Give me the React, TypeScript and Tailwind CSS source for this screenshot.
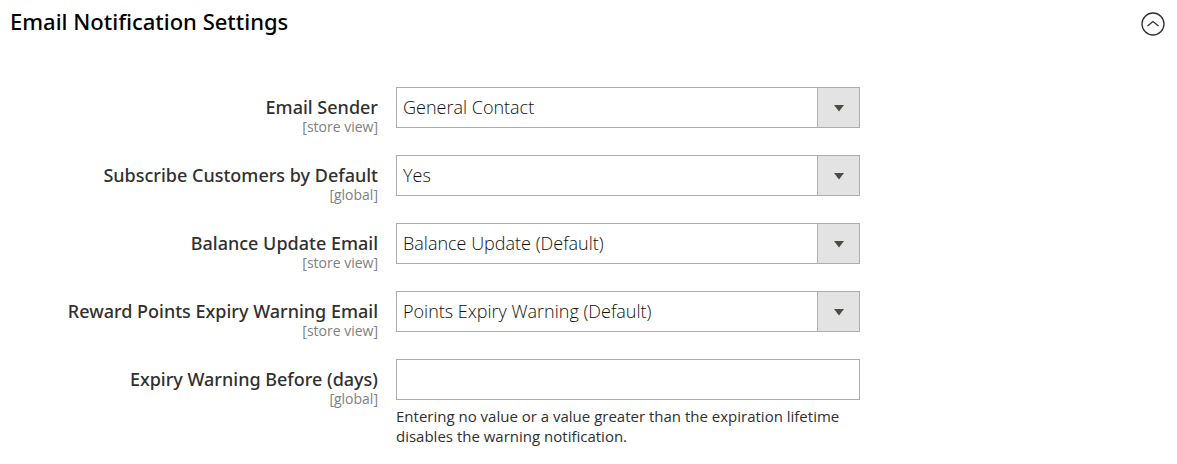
import React, { useState } from "react";

type Field = { id: string; label: string; scope: string; options?: string[]; note?: string };

const fields: Field[] = [
  { id: "sender", label: "Email Sender", scope: "[store view]", options: ["General Contact"] },
  { id: "subscribe", label: "Subscribe Customers by Default", scope: "[global]", options: ["Yes", "No"] },
  { id: "balance", label: "Balance Update Email", scope: "[store view]", options: ["Balance Update (Default)"] },
  { id: "expiry", label: "Reward Points Expiry Warning Email", scope: "[store view]", options: ["Points Expiry Warning (Default)"] },
  {
    id: "days",
    label: "Expiry Warning Before (days)",
    scope: "[global]",
    note: "Entering no value or a value greater than the expiration lifetime disables the warning notification.",
  },
];

function SelectBox({ id, options }: { id: string; options: string[] }) {
  return (
    <div className="grid h-[41px] border border-[#adadad] bg-white">
      <select id={id} className="col-start-1 row-start-1 w-full appearance-none bg-transparent pr-12 pb-0.5 pl-1.5 text-lg leading-6 font-light text-[#101010]">
        {options.map((o) => (
          <option key={o}>{o}</option>
        ))}
      </select>
      <span className="pointer-events-none col-start-1 row-start-1 flex w-[42px] items-center justify-center justify-self-end border-l border-[#adadad] bg-[#e3e3e3]">
        <svg width="12" height="8" viewBox="0 0 12 8" aria-hidden="true">
          <path d="M1 1h10L6 7.500z" fill="#514943" />
        </svg>
      </span>
    </div>
  );
}

export default function App() {
  const [open, setOpen] = useState(true);
  return (
    <section className="bg-white pt-2 pr-3 pb-4 pl-2.5 font-['Open_Sans','Noto_Sans',sans-serif] text-[#303030]">
      <header className="flex items-end justify-between">
        <h2 className="pb-[3px] font-['Noto_Sans','Open_Sans',sans-serif] text-[22px] leading-6 font-medium text-black">Email Notification Settings</h2>
        <button type="button" aria-label="Toggle section" aria-expanded={open} onClick={() => setOpen(!open)}>
          <svg className="block" width="24" height="28" viewBox="0 -4 24 28" fill="none" stroke="#303030" strokeWidth="1.3" aria-hidden="true">
            <circle cx="12" cy="12" r="11" />
            <path d="M6.5 14L12 9.500l5.500 4.500" />
          </svg>
        </button>
      </header>
      {open && (
        <div className="mt-[51px] flex flex-col gap-[27px]">
          {fields.map((f) => (
            <div key={f.id} className="grid grid-cols-[368fr_464fr_287fr] gap-[18px]">
              <label htmlFor={f.id} className="flex h-[41px] flex-col pt-2 text-right">
                <span className="font-['Noto_Sans','Open_Sans',sans-serif] text-lg leading-6 font-medium whitespace-nowrap">{f.label}</span>
                <span className="text-sm leading-4 text-[#808080]">{f.scope}</span>
              </label>
              <div>
                {f.options ? (
                  <SelectBox id={f.id} options={f.options} />
                ) : (
                  <input id={f.id} type="text" className="block h-[41px] w-full border border-[#adadad] bg-white px-1.5 text-lg" />
                )}
                {f.note && <p className="mt-1.5 text-[15px] leading-5">{f.note}</p>}
              </div>
            </div>
          ))}
        </div>
      )}
    </section>
  );
}
